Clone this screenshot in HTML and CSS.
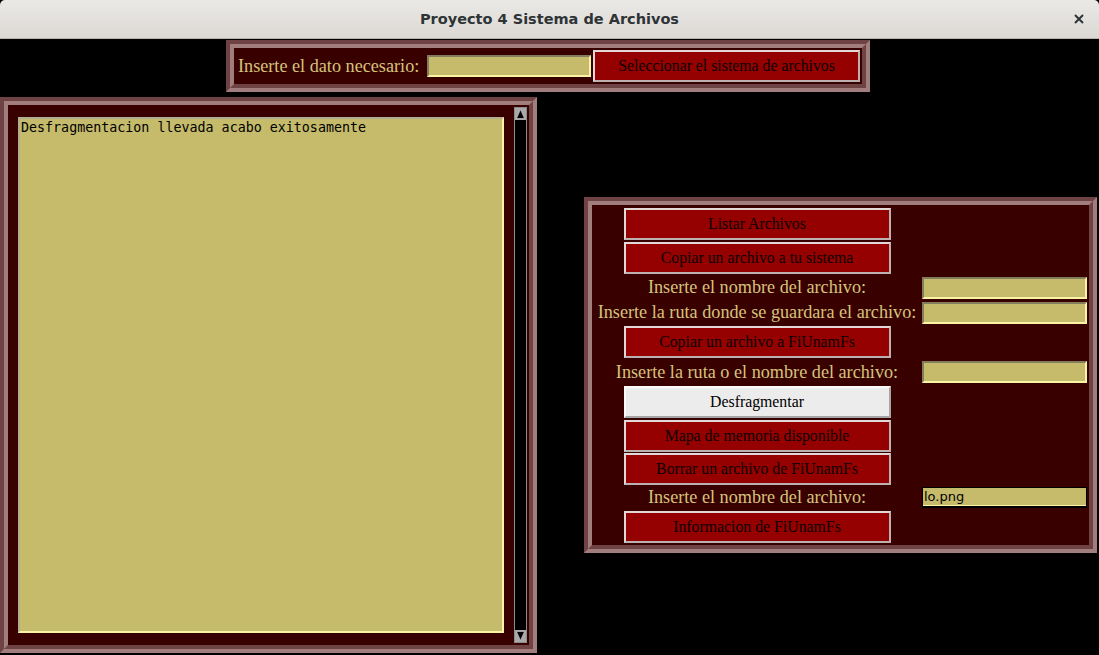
FILE: index.html
```html
<!DOCTYPE html>
<html lang="es">
<head>
<meta charset="utf-8">
<title>Proyecto 4 Sistema de Archivos</title>
<link rel="stylesheet" href="styles.css">
</head>
<body>
<header class="titlebar">
  <span></span>
  <span class="title">Proyecto 4 Sistema de Archivos</span>
  <svg class="close" width="10" height="10" viewBox="0 0 10 10"><path d="M1 1L9 9M9 1L1 9" stroke="#2e3436" stroke-width="2" fill="none"/></svg>
</header>
<main class="app">
  <section class="groove topframe">
    <div class="groove-in topframe-in">
      <span class="lbl">Inserte el dato necesario:</span>
      <div class="entry top-entry"></div>
      <button class="btn top-btn">Seleccionar el sistema de archivos</button>
    </div>
  </section>

  <section class="groove leftframe">
    <div class="groove-in leftframe-in">
      <div class="textbox">Desfragmentacion llevada acabo exitosamente</div>
      <div class="scroll">
        <svg class="arrow" width="11" height="12" viewBox="0 0 11 12"><rect width="11" height="12" fill="#a9a9a9"/><path d="M5.5 1.5L9.5 10.5H1.5Z" fill="#000" stroke="#d0d0d0" stroke-width="0.6"/></svg>
        <svg class="arrow" width="11" height="12" viewBox="0 0 11 12"><rect width="11" height="12" fill="#a9a9a9"/><path d="M5.5 10.5L9.5 1.5H1.5Z" fill="#000" stroke="#d0d0d0" stroke-width="0.6"/></svg>
      </div>
    </div>
  </section>

  <section class="groove rightframe">
    <div class="groove-in rightframe-in">
      <button class="btn c1">Listar Archivos</button>
      <button class="btn c1">Copiar un archivo a tu sistema</button>
      <span class="lbl c1">Inserte el nombre del archivo:</span>
      <div class="entry c2"></div>
      <span class="lbl c1">Inserte la ruta donde se guardara el archivo:</span>
      <div class="entry c2"></div>
      <button class="btn c1">Copiar un archivo a FiUnamFs</button>
      <span class="lbl c1">Inserte la ruta o el nombre del archivo:</span>
      <div class="entry c2"></div>
      <button class="btn light c1">Desfragmentar</button>
      <button class="btn c1">Mapa de memoria disponible</button>
      <button class="btn c1">Borrar un archivo de FiUnamFs</button>
      <span class="lbl c1">Inserte el nombre del archivo:</span>
      <div class="entry c2 focus">lo.png</div>
      <button class="btn c1">Informacion de FiUnamFs</button>
    </div>
  </section>
</main>
</body>
</html>
```

FILE: styles.css
```css
* { box-sizing: border-box; }

html, body {
  margin: 0;
  padding: 0;
  background: #000;
  width: 1099px;
  height: 655px;
  overflow: hidden;
}

.titlebar {
  height: 39px;
  display: grid;
  grid-template-columns: 1fr auto 1fr;
  align-items: center;
  background: linear-gradient(#ebe9e6, #dbd8d4);
  border-bottom: 1px solid #b9b3ad;
  border-radius: 5px 5px 0 0;
}

.title {
  font-family: "DejaVu Sans", sans-serif;
  font-weight: bold;
  font-size: 14.5px;
  color: #2e3436;
}

.close {
  justify-self: end;
  margin-right: 15px;
}

.app {
  display: grid;
  grid-template-columns: 537px 1fr;
  grid-template-rows: auto auto;
  padding-top: 1px;
}

.groove {
  border: 4px solid;
  border-color: #6f4343 #a27d7d #a27d7d #6f4343;
}

.groove-in {
  height: 100%;
  border: 4px solid;
  border-color: #a27d7d #6f4343 #6f4343 #a27d7d;
  background: #390000;
}

.lbl {
  font-family: "Liberation Serif", serif;
  font-size: 18.2px;
  line-height: 1;
  color: #d4c47c;
  white-space: nowrap;
}

.entry {
  width: 165px;
  height: 22px;
  background: #c5bb6b;
  border: 2px solid;
  border-color: #827d5c #fbf3a6 #fbf3a6 #827d5c;
  font-family: "DejaVu Sans", sans-serif;
  font-size: 13px;
  line-height: 17px;
  color: #000;
  padding: 0 1px;
}

.entry.focus {
  border: 1px solid #000;
  border-bottom: 2px solid #000;
  box-shadow: inset 0 -1px 0 #fbf3a6;
  height: 21px;
}

.btn {
  width: 267px;
  height: 32px;
  margin: 0;
  padding: 0;
  background: #950000;
  border: 2px solid;
  border-color: #e2d8d8 #bdb0b0 #bdb0b0 #e2d8d8;
  font-family: "Liberation Serif", serif;
  font-size: 15.8px;
  color: #0c0000;
}

.btn.light {
  background: #ececec;
  border-color: #fafafa #a6a6a6 #a6a6a6 #fafafa;
  color: #000;
}

/* top frame */
.topframe {
  grid-column: 1 / span 2;
  justify-self: center;
  width: 644px;
  height: 52px;
  margin-bottom: 5px;
  margin-right: 3px;
}

.topframe-in {
  display: flex;
  align-items: center;
  padding: 0 2px 0 4px;
}

.top-entry {
  width: 164px;
  margin-left: 8px;
}

.top-btn {
  margin-left: 2px;
}

/* left frame */
.leftframe {
  width: 537px;
  height: 556px;
}

.leftframe-in {
  display: flex;
  align-items: center;
  gap: 10px;
  padding: 2px 2px 2px 10px;
}

.textbox {
  width: 486px;
  height: 516px;
  background: #c5bb6b;
  border: 2px solid;
  border-color: #b2ae92 #fbf3a6 #fbf3a6 #b2ae92;
  font-family: "DejaVu Sans Mono", monospace;
  font-size: 13.33px;
  line-height: 18px;
  color: #000;
  padding: 0 1px;
}

.scroll {
  width: 13px;
  height: 100%;
  background: #000;
  border: 1px solid #8c8c8c;
  display: flex;
  flex-direction: column;
  justify-content: space-between;
}

.arrow {
  display: block;
}

/* right frame */
.rightframe {
  align-self: center;
  justify-self: end;
  margin-right: 2px;
  width: 513px;
  height: 356px;
}

.rightframe-in {
  display: grid;
  grid-template-columns: 330px 165px;
  grid-template-rows: 35px 34px 25px 25px 34px 26px 34px 33px 33px 24px 36px;
  align-items: center;
  padding: 1px 2px 0 0;
}

.c1 {
  grid-column: 1;
  justify-self: center;
}

.c2 {
  grid-column: 2;
}
```
